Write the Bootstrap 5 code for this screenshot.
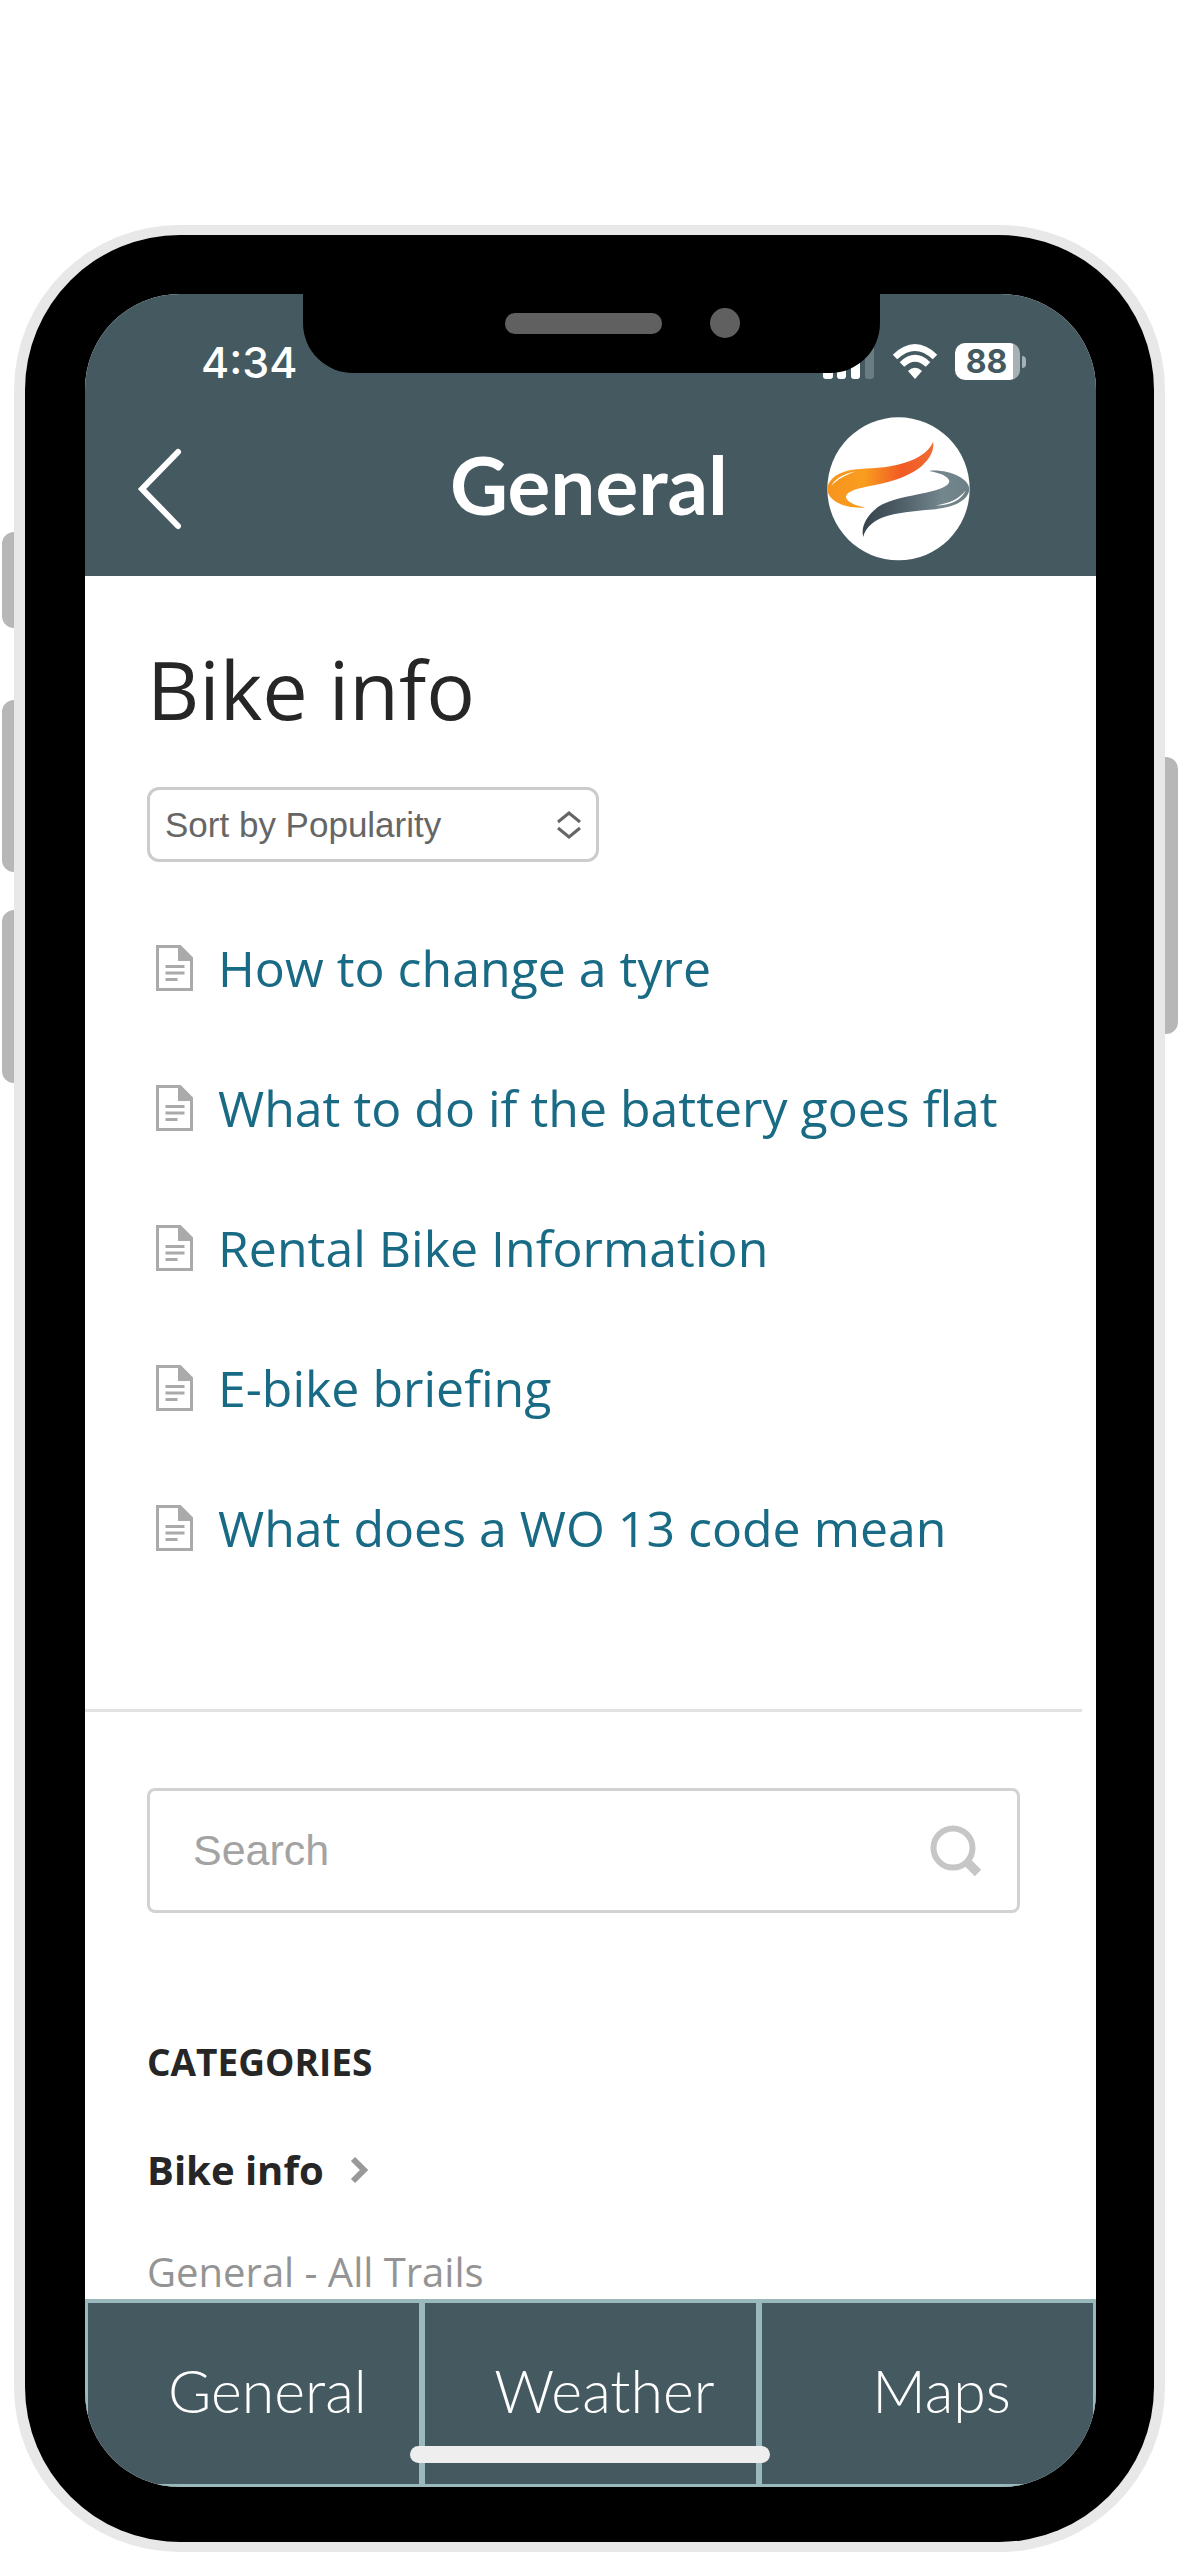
<!DOCTYPE html>
<html lang="en">
<head>
<meta charset="utf-8">
<meta name="viewport" content="width=device-width, initial-scale=1">
<title>General - Bike info</title>
<link href="https://cdn.jsdelivr.net/npm/bootstrap@5.3.0/dist/css/bootstrap.min.css" rel="stylesheet">
<style>
  :root { --slate: #455a60; --edge: #9ab9bd; --teal: #196b85; --ink: #262626; }
  body { font-family: "Open Sans", sans-serif; color: var(--ink); background: #fff; }
  .stage { padding: 225px 14px 3px; }

  /* Phone shell */
  .shell { background: #e8e8e8; border-radius: 165px; padding: 10px 11px; }
  .bezel { background: #000; border-radius: 155px; padding: 59px 58px 55px 60px; }
  .display { border-radius: 95px; background: #fff; }
  .side-key { position: absolute; width: 12px; background: #b7b7b7; }
  .key-left { left: -12px; border-radius: 12px 0 0 12px; }
  .key-right { right: -13px; width: 13px; border-radius: 0 12px 12px 0; }
  .key-mute { top: 307px; height: 96px; }
  .key-up { top: 475px; height: 172px; }
  .key-down { top: 685px; height: 173px; }
  .key-power { top: 532px; height: 277px; }
  .notch { position: absolute; top: -1px; left: 50%; margin-left: -288px; width: 577px; height: 80px; background: #000; border-radius: 0 0 50px 50px; z-index: 2; padding: 0 140px 20px 202px; }
  .speaker { width: 157px; height: 21px; border-radius: 10px; background: #606060; }
  .lens { width: 30px; height: 30px; border-radius: 50%; background: #606060; }

  /* Header */
  .app-header { background: var(--slate); color: #fff; padding-bottom: 15px; }
  .status-row { height: 123px; padding: 12px 70px 0 116px; font-family: Inter, sans-serif; }
  .clock { font-size: 43px; font-weight: 500; line-height: 52px; }
  .charge { width: 65px; height: 37px; border-radius: 10px; background: linear-gradient(to right, #fff 58px, #a5b1b4 58px); color: var(--slate); font-size: 32px; font-weight: 700; padding-right: 2px; }
  .charge-tip { width: 4px; height: 12px; margin-left: 2px; border-radius: 0 4px 4px 0; background: #a5b1b4; }
  .title-row { display: grid; grid-template-columns: 1fr auto 1fr; padding: 0 126px 0 50px; }
  .app-title { font-family: Lato, sans-serif; font-weight: 700; font-size: 80px; line-height: 90px; padding: 0 0 10px 73px; }

  /* Page body */
  .content { padding: 58px 76px 0 62px; }
  .page-title { font-size: 81px; line-height: 110px; font-weight: 400; }
  .sort-box { width: 452px; margin-top: 43px; }
  .sort-box .form-select { height: 75px; padding: 0 60px 0 15px; border: 3px solid #ccc; border-radius: 12px; background: #fff; color: #666; font: 35px "Liberation Sans", sans-serif; }
  .sort-box svg { position: absolute; right: 18px; top: 24px; pointer-events: none; }
  .article-list { padding: 36px 0 111px; }
  .article-list li { height: 140px; padding-left: 9px; gap: 25px; }
  .article-list a { color: var(--teal); font-size: 50px; line-height: 68px; text-decoration: none; white-space: nowrap; }
  .rule { height: 3px; background: #e2e2e2; margin-right: 14px; }
  .side { padding: 76px 76px 0 62px; }
  .search-box .form-control { height: 125px; padding: 0 110px 0 43px; border: 3px solid #d2d2d2; border-radius: 8px; font: 43px "Liberation Sans", sans-serif; }
  .search-box .form-control::placeholder { color: #a3a3a3; }
  .search-box .btn { position: absolute; right: 38px; top: 37px; line-height: 0; }
  .cat-title { font-size: 37px; line-height: 52px; font-weight: 700; padding-top: 123px; }
  .cat-list { padding-top: 55px; }
  .cat-list a { font-size: 40px; line-height: 54px; color: #949494; text-decoration: none; }
  .cat-list .current { font-weight: 700; color: var(--ink); }
  .cat-list li + li { padding-top: 48px; }

  /* Bottom tabs */
  .tab-strip { border: 3px solid var(--edge); border-top-width: 4px; background: var(--slate); }
  .tab-strip a { color: #fff; font-family: Lato, sans-serif; font-weight: 300; font-size: 59px; line-height: 70px; padding: 53px 0 58px 28px; text-decoration: none; text-align: center; }
  .tab-strip a + a { border-left: 6px solid var(--edge); }
  .home-bar { position: absolute; left: 50%; margin-left: -181px; bottom: 24px; width: 360px; height: 17px; border-radius: 9px; background: #eee; }
</style>
</head>
<body>
<svg width="0" height="0" class="position-absolute" aria-hidden="true">
  <symbol id="doc" viewBox="0 0 37 46">
    <path d="M1.500 1.500H24L35.500 13V44.500H1.500Z" fill="#fff" stroke="#aaa" stroke-width="3"/>
    <path d="M22 1h3l11 12v3H22Z" fill="#aaa"/>
    <path d="M9.500 21.500h19M9.500 28h19M9.500 34.500h12" stroke="#aaa" stroke-width="3"/>
  </symbol>
</svg>
<main class="stage">
  <div class="shell position-relative">
    <span class="side-key key-left key-mute"></span>
    <span class="side-key key-left key-up"></span>
    <span class="side-key key-left key-down"></span>
    <span class="side-key key-right key-power"></span>
    <div class="bezel">
      <div class="display position-relative overflow-hidden">
        <div class="notch d-flex align-items-center justify-content-between">
          <span class="speaker"></span>
          <span class="lens"></span>
        </div>

        <header class="app-header">
          <div class="status-row d-flex align-items-center justify-content-between">
            <span class="clock">4:34</span>
            <div class="d-flex align-items-center">
              <svg width="52" height="36" viewBox="0 0 52 36" aria-label="Signal">
                <rect x="0" y="25" width="10" height="10" rx="3" fill="#fff"/>
                <rect x="14" y="18" width="9" height="17" rx="3" fill="#fff"/>
                <rect x="28" y="9" width="9" height="26" rx="3" fill="#fff"/>
                <rect x="42" y="1" width="9" height="34" rx="3" fill="#6b7c82"/>
              </svg>
              <svg class="mx-3" width="48" height="36" viewBox="0 0 48 36" aria-label="Wi-Fi">
                <g fill="none" stroke="#fff" stroke-width="6.500">
                  <path d="M4 13Q24 -6 44 13"/>
                  <path d="M11 20.500Q24 8 37 20.500"/>
                </g>
                <path d="M17 27Q24 20.500 31 27L24 35Z" fill="#fff"/>
              </svg>
              <span class="charge d-flex align-items-center justify-content-center">88</span>
              <span class="charge-tip"></span>
            </div>
          </div>
          <div class="title-row align-items-center">
            <button class="btn p-0 border-0 text-start" type="button" aria-label="Back">
              <svg width="52" height="82" viewBox="0 0 52 82" fill="none" stroke="#fff" stroke-width="6" stroke-linecap="round"><path d="M43 4L7 41L43 78"/></svg>
            </button>
            <h1 class="app-title m-0">General</h1>
            <div class="text-end">
              <svg width="143" height="144" viewBox="81 50 430 433" role="img" aria-label="Trail logo">
                <defs>
                  <linearGradient id="warm" x1="0" x2="1"><stop offset="0" stop-color="#f8941d"/><stop offset=".35" stop-color="#f99d1f"/><stop offset=".7" stop-color="#f15a24"/><stop offset="1" stop-color="#f26a35"/></linearGradient>
                  <linearGradient id="cool" x1="0" x2="1"><stop offset="0" stop-color="#36434d"/><stop offset=".3" stop-color="#4a5963"/><stop offset=".75" stop-color="#74878d"/><stop offset="1" stop-color="#6c7f84"/></linearGradient>
                </defs>
                <ellipse cx="296" cy="266" rx="214" ry="215" fill="#fff"/>
                <path d="M400 125C384 160 345 182 290 194C240 206 190 202 148 210C105 220 82 243 82 268C84 302 135 327 196 322C160 315 138 303 138 289C142 271 176 264 222 255C280 244 336 224 366 197C391 174 404 150 400 125Z" fill="url(#warm)"/>
                <path d="M95 257C103 237 130 221 166 214C136 225 110 238 95 257Z" fill="#fff"/>
                <path d="M190 411C182 380 200 347 234 321C270 297 326 289 378 278C421 269 449 258 449 242C444 227 421 218 388 212C444 206 508 234 509 266C508 303 456 324 398 328C341 333 290 337 248 352C215 366 195 386 190 411Z" fill="url(#cool)"/>
                <path d="M408 316C450 309 480 295 498 270C488 298 452 316 408 316Z" fill="#fff"/>
              </svg>
            </div>
          </div>
        </header>

        <section class="content">
          <h2 class="page-title m-0">Bike info</h2>
          <div class="sort-box position-relative">
            <select class="form-select" id="sort" aria-label="Sort articles">
              <option>Sort by Popularity</option>
            </select>
            <svg width="24" height="28" viewBox="0 0 24 28" fill="none" stroke="#666" stroke-width="3"><path d="M1 11L12 2L23 11M1 17L12 26L23 17"/></svg>
          </div>
          <ul class="article-list list-unstyled m-0">
            <li class="d-flex align-items-center"><svg width="37" height="46"><use href="#doc"/></svg><a href="#">How to change a tyre</a></li>
            <li class="d-flex align-items-center"><svg width="37" height="46"><use href="#doc"/></svg><a href="#">What to do if the battery goes flat</a></li>
            <li class="d-flex align-items-center"><svg width="37" height="46"><use href="#doc"/></svg><a href="#">Rental Bike Information</a></li>
            <li class="d-flex align-items-center"><svg width="37" height="46"><use href="#doc"/></svg><a href="#">E-bike briefing</a></li>
            <li class="d-flex align-items-center"><svg width="37" height="46"><use href="#doc"/></svg><a href="#">What does a WO 13 code mean</a></li>
          </ul>
        </section>
        <div class="rule"></div>
        <section class="side">
          <form class="search-box position-relative">
            <input class="form-control" id="search" type="text" placeholder="Search" aria-label="Search">
            <button class="btn p-0 border-0" type="button" aria-label="Search">
              <svg width="52" height="52" viewBox="0 0 52 52" fill="none" stroke="#c6c6c6"><circle cx="23" cy="23" r="19.500" stroke-width="6"/><path d="M36 36L48 48" stroke-width="9"/></svg>
            </button>
          </form>
          <h3 class="cat-title m-0">CATEGORIES</h3>
          <ul class="cat-list list-unstyled m-0">
            <li class="d-flex align-items-center"><a class="current" href="#">Bike info</a><svg class="ms-4" width="24" height="28" viewBox="0 0 24 28" fill="none" stroke="#999" stroke-width="6"><path d="M5 3L16 14L5 25"/></svg></li>
            <li class="d-flex"><a href="#">General - All Trails</a></li>
          </ul>
        </section>

        <nav class="tab-strip d-flex">
          <a class="col" href="#">General</a>
          <a class="col" href="#">Weather</a>
          <a class="col" href="#">Maps</a>
        </nav>
        <span class="home-bar"></span>
      </div>
    </div>
  </div>
</main>
<script src="https://cdn.jsdelivr.net/npm/bootstrap@5.3.0/dist/js/bootstrap.bundle.min.js"></script>
</body>
</html>
